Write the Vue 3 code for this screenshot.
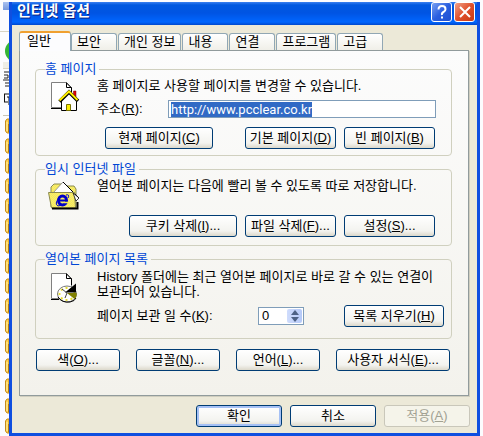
<template>
  <div class="desktop">
    <div class="explorer-edge" aria-hidden="true">
      <div class="edge-title"></div>
      <div class="edge-menu"></div>
      <div class="edge-toolbar"><span class="back-btn"></span></div>
      <div class="edge-address"></div>
      <svg class="edge-glyph" viewBox="0 0 9 38" width="9" height="38">
        <path d="M4 3h5M4 6h4v3H4M3 11h6M5 14h4M5 17h4" stroke="#222" fill="none" />
        <path d="M4 25h5M4.500 25v8M4 33h4M7 28h2v8" stroke="#111" fill="none" />
      </svg>
      <div class="edge-header"></div>
      <div class="edge-list">
        <svg v-for="n in 16" :key="n" viewBox="0 0 9 20" width="9" height="20">
          <path d="M9 3H7L5.500 5v10L7 17h2z" fill="#ffd24a" stroke="#c48a1c" />
          <path d="M7 6v9" stroke="#fff0a8" />
          <path d="M8.500 8v8" stroke="#b27c14" />
        </svg>
      </div>
    </div>

    <main class="dialog">
      <header class="title-bar">
        <h1>인터넷 옵션</h1>
        <button class="caption-btn help" type="button" aria-label="도움말">
          <svg viewBox="0 0 18 18" width="18" height="18">
            <path d="M5.500 6.500Q5.500 3 9 3t3.500 3.200Q12.500 8 10.500 9T9 12" fill="none" stroke="#fff" stroke-width="2" />
            <path d="M8 13.500h2v2H8z" fill="#fff" />
          </svg>
        </button>
        <button class="caption-btn close" type="button" aria-label="닫기">
          <svg viewBox="0 0 18 18" width="18" height="18">
            <path d="M4 4l10 10M14 4L4 14" stroke="#fff" stroke-width="2" />
          </svg>
        </button>
      </header>

      <nav class="tabs" role="tablist">
        <button
          v-for="tab in tabs"
          :key="tab"
          type="button"
          role="tab"
          class="tab"
          :class="{ active: tab === activeTab }"
          :aria-selected="tab === activeTab"
          @click="activeTab = tab"
        >{{ tab }}</button>
      </nav>

      <section class="panel">
        <fieldset class="group home">
          <legend>홈 페이지</legend>
          <div class="group-body">
            <svg class="icon" viewBox="0 0 32 32" width="32" height="32">
              <path d="M3.500 2.500h15l5 5v20h-20z" fill="#fff" stroke="#808080" />
              <path d="M18.500 2.500v5h5M18.500 3l5 5v5M3 28.500h11" fill="none" stroke="#000" />
              <path d="M25.500 11h2.500v7l-2.500-3z" fill="#e00000" stroke="#800000" stroke-width=".5" />
              <path d="M14 20l7-7 7 7v11H14z" fill="#fff" />
              <path d="M13.500 20v10.500h15V20" fill="none" stroke="#000" />
              <path d="M11.500 21.500L21 12l9 9" fill="none" stroke="#000" stroke-width="3.500" />
              <path d="M11.500 20.500L21 11.500l8.500 8.500" fill="none" stroke="#ffef00" stroke-width="2" />
              <path d="M18.500 24.500h4v6h-4z" fill="#ffef00" stroke="#7a7400" />
            </svg>
            <div class="fields">
              <p>홈 페이지로 사용할 페이지를 변경할 수 있습니다.</p>
              <div class="address-row">
                <label for="address">주소(<u>R</u>):</label>
                <input id="address" ref="addressInput" v-model="address" type="text" spellcheck="false">
              </div>
              <div class="actions">
                <button class="btn wide" type="button">현재 페이지(<u>C</u>)</button>
                <button class="btn" type="button">기본 페이지(<u>D</u>)</button>
                <button class="btn" type="button">빈 페이지(<u>B</u>)</button>
              </div>
            </div>
          </div>
        </fieldset>

        <fieldset class="group files">
          <legend>임시 인터넷 파일</legend>
          <div class="group-body">
            <svg class="icon" viewBox="0 0 32 32" width="32" height="32">
              <defs>
                <pattern id="dither" width="2" height="2" patternUnits="userSpaceOnUse">
                  <rect width="2" height="2" fill="#fff04a" />
                  <path d="M0 0h1v1H0zM1 1h1v1H1z" fill="#eee680" />
                </pattern>
              </defs>
              <path d="M3 27V7l3-3h8l2 2h10l2 3v18z" fill="url(#dither)" stroke="#8a8a50" />
              <path d="M5 13L15 2l16 16-4 3V13z" fill="#fff" stroke="#777" stroke-width=".7" />
              <path d="M15 2l16 16" stroke="#000" />
              <path d="M.5 12.500h26l1 15.500h-24z" fill="url(#dither)" stroke="#8a8a50" />
              <path d="M4 28.500h25.500V22" fill="none" stroke="#000" stroke-width="2" />
              <path d="M25 13l6 5-3 3z" fill="#fff" stroke="#000" stroke-width=".7" />
              <ellipse cx="14.500" cy="20.500" rx="4" ry="4.500" fill="none" stroke="#0000c8" stroke-width="3" />
              <path d="M11 20.500h8" stroke="#0000c8" stroke-width="2" />
              <path d="M16 22.500h5" stroke="#f4ea50" stroke-width="1.500" />
              <path d="M18 15q4-1 2 3M11 18q-5 6-1 8 2 0 4-2" fill="none" stroke="#0000c8" />
            </svg>
            <div class="fields">
              <p>열어본 페이지는 다음에 빨리 볼 수 있도록 따로 저장합니다.</p>
              <div class="actions">
                <button class="btn wide" type="button">쿠키 삭제(<u>I</u>)...</button>
                <button class="btn" type="button">파일 삭제(<u>F</u>)...</button>
                <button class="btn" type="button">설정(<u>S</u>)...</button>
              </div>
            </div>
          </div>
        </fieldset>

        <fieldset class="group history">
          <legend>열어본 페이지 목록</legend>
          <div class="group-body">
            <svg class="icon" viewBox="0 0 32 32" width="32" height="32">
              <path d="M3.500 2.500h15l5 5v20h-20z" fill="#fff" stroke="#808080" />
              <path d="M18.500 2.500v5h5M18.500 3l5 5v6M3 28.500h8" fill="none" stroke="#000" />
              <ellipse cx="19" cy="23" rx="9.500" ry="8" fill="#fff" stroke="#777" />
              <ellipse cx="19" cy="23" rx="7.500" ry="6" fill="none" stroke="#e6dc30" stroke-width="2" stroke-dasharray="2 3" />
              <path d="M10 26q4 6 12 5 5-1 6-4" fill="none" stroke="#000" />
              <path d="M19 22h9.500q1 3-2 6z" fill="#808000" />
              <path d="M17 21.500l11-9v9z" fill="#000" />
              <path d="M14 18l5 4-2 5" fill="none" stroke="#444" />
            </svg>
            <div class="fields">
              <p>History 폴더에는 최근 열어본 페이지로 바로 갈 수 있는 연결이<br>보관되어 있습니다.</p>
              <div class="history-row">
                <label for="days">페이지 보관 일 수(<u>K</u>):</label>
                <div class="spinner">
                  <input id="days" v-model.number="days" type="text">
                  <div class="spin-buttons">
                    <button type="button" aria-label="늘리기" @click="days++">
                      <svg viewBox="0 0 8 5" width="8" height="5"><path d="M0 5l4-5 4 5z" fill="#4d6185" /></svg>
                    </button>
                    <button type="button" aria-label="줄이기" @click="days = Math.max(0, days - 1)">
                      <svg viewBox="0 0 8 5" width="8" height="5"><path d="M0 0l4 5 4-5z" fill="#4d6185" /></svg>
                    </button>
                  </div>
                </div>
                <button class="btn clear" type="button">목록 지우기(<u>H</u>)</button>
              </div>
            </div>
          </div>
        </fieldset>

        <div class="extras">
          <button class="btn" type="button">색(<u>O</u>)...</button>
          <button class="btn" type="button">글꼴(<u>N</u>)...</button>
          <button class="btn" type="button">언어(<u>L</u>)...</button>
          <button class="btn long" type="button">사용자 서식(<u>E</u>)...</button>
        </div>
      </section>

      <footer class="footer">
        <button class="btn default" type="button">확인</button>
        <button class="btn" type="button">취소</button>
        <button class="btn" type="button" disabled>적용(<u>A</u>)</button>
      </footer>
    </main>
  </div>
</template>

<script setup>
import { ref, onMounted } from 'vue'

const tabs = ['일반', '보안', '개인 정보', '내용', '연결', '프로그램', '고급']
const activeTab = ref('일반')
const address = ref('http://www.pcclear.co.kr')
const days = ref(0)
const addressInput = ref(null)

onMounted(() => {
  addressInput.value.focus()
  addressInput.value.select()
})
</script>

<style>
body {
  margin: 0;
  background: #fcfcfe;
}
</style>

<style scoped>
.desktop {
  display: flex;
  padding: 2px 3px 3px 0;
  font-family: "Liberation Sans", "Noto Sans CJK KR", sans-serif;
  font-size: 13px;
  line-height: 16px;
  color: #000;
}

button,
input {
  box-sizing: border-box;
  font: inherit;
  color: inherit;
  margin: 0;
  padding: 0;
}

p {
  margin: 0;
  white-space: nowrap;
}

/* sliver of the explorer window behind the dialog */
.explorer-edge {
  width: 9px;
  flex: none;
  overflow: hidden;
}

.explorer-edge svg {
  display: block;
}

.edge-title {
  height: 8px;
  margin-left: 3px;
  background: linear-gradient(#a9c1f0, #7798dc);
}

.edge-menu {
  height: 21px;
  border-bottom: 1px solid #d8d4c4;
}

.edge-toolbar {
  height: 30px;
  padding-top: 8px;
  box-sizing: border-box;
  overflow: hidden;
}

.back-btn {
  display: block;
  width: 22px;
  height: 22px;
  margin-left: 5px;
  border-radius: 50%;
  background: #36b536;
}

.edge-address {
  height: 6px;
  margin-left: 3px;
  background: #efeee6;
  border-bottom: 1px solid #d8d4c4;
}

.edge-header {
  height: 8px;
  margin-left: 3px;
  border-bottom: 1px solid #c9c5b4;
}

.dialog {
  flex: 1;
  min-width: 0;
  background: #ece9d8;
  border: solid #0f4fe0;
  border-width: 0 3px 3px;
}

.title-bar {
  display: flex;
  gap: 2px;
  height: 23px;
  padding-right: 2px;
  background: linear-gradient(#3a80f0 0, #0058e0 3px, #0054e3 11px, #0066ff 20px, #0048cc 23px);
}

.title-bar h1 {
  flex: 1;
  margin: 0;
  padding-left: 5px;
  font-size: 15px;
  line-height: 18px;
  color: #fff;
  text-shadow: 1px 1px #0a1f80;
}

.caption-btn {
  width: 21px;
  height: 20px;
  display: grid;
  place-items: center;
  border: 1px solid #fff;
  border-radius: 3px;
}

.help {
  background: linear-gradient(135deg, #7ba2f2, #2a5fe0 50%, #1e4fd0);
}

.close {
  background: linear-gradient(135deg, #f0a088, #e0502c 50%, #c83a14);
}

.tabs {
  display: flex;
  align-items: flex-end;
  gap: 1px;
  padding: 6px 8px 0 7px;
}

.tab {
  height: 17px;
  min-width: 46px;
  padding: 0 5px;
  border: 1px solid #91a7b4;
  border-bottom: 0;
  border-radius: 3px 3px 0 0;
  background: linear-gradient(#fff, #f0efe8);
  text-align: left;
  line-height: 16px;
  white-space: nowrap;
}

.tab.active {
  position: relative;
  height: 20px;
  width: 52px;
  margin-right: -1px;
  margin-bottom: -1px;
  padding: 0 7px 3px;
  border-top: 2px solid #f0a030;
  background: #fcfcfe;
}

.panel {
  margin: 0 8px 0 7px;
  padding: 10px 16px 24px 15px;
  border: 1px solid #919b9c;
  background: linear-gradient(#fcfcfc, #f3f2ec);
  box-shadow: 1px 1px #d0cebf;
}

.group {
  margin: 0 0 5px;
  padding: 1px 16px 6px 9px;
  min-width: 0;
  border: 1px solid #d0d0bf;
  border-radius: 4px;
}

.group.files {
  padding-bottom: 8px;
}

.group.history {
  margin-bottom: 10px;
  padding: 2px 7px 11px 9px;
}

legend {
  padding: 0 3px 0 0;
  color: #0046d5;
}

.group-body {
  display: flex;
  gap: 17px;
}

.icon {
  flex: none;
  margin: 2px 0 0 3px;
}

.fields {
  flex: 1;
  min-width: 0;
}

.address-row {
  display: flex;
  align-items: center;
  margin: 6px 0 9px;
}

.address-row label {
  width: 71px;
}

.address-row input {
  flex: 1;
  min-width: 0;
  height: 18px;
  margin-right: -1px;
  padding: 0 2px;
  border: 1px solid #7f9db9;
  background: #fff;
  font-family: Roboto, sans-serif;
  outline: none;
}

.address-row input::selection {
  background: #316ac5;
  color: #fff;
}

.actions {
  display: flex;
  justify-content: flex-end;
  gap: 8px;
}

.files .actions {
  margin-top: 21px;
}

.btn {
  width: 91px;
  height: 22px;
  border: 1px solid #003c74;
  border-radius: 3px;
  background: linear-gradient(#fff, #f3f3ef 75%, #dcd8cb);
  line-height: 18px;
  white-space: nowrap;
}

.btn.wide {
  width: 108px;
}

.home .btn.wide {
  margin-right: 24px;
}

.history p {
  line-height: 15px;
}

.history-row {
  display: flex;
  align-items: center;
  margin-top: 6px;
}

.history-row label {
  width: 161px;
}

.spinner {
  display: flex;
  box-sizing: border-box;
  width: 46px;
  height: 18px;
  border: 1px solid #7f9db9;
  background: #fff;
}

.spinner input {
  flex: 1;
  min-width: 0;
  padding-left: 3px;
  border: 0;
  background: none;
  outline: none;
}

.spin-buttons {
  display: flex;
  flex-direction: column;
  width: 15px;
  margin: 1px;
  border-radius: 2px;
  background: linear-gradient(90deg, #cfdcfc, #b5c9f8);
}

.spin-buttons button {
  flex: 1;
  display: grid;
  place-items: center;
  min-height: 0;
  border: 0;
  background: none;
}

.btn.clear {
  width: 100px;
  margin-left: auto;
}

.extras {
  display: flex;
  gap: 16px;
  padding-left: 1px;
}

.extras .btn {
  width: 84px;
}

.extras .btn.long {
  width: 114px;
}

.footer {
  display: flex;
  justify-content: flex-end;
  gap: 8px;
  padding: 9px 7px 3px;
}

.footer .btn {
  width: 86px;
}

.btn.default {
  box-shadow: inset 0 0 0 2px #a6c1f5;
}

.btn:disabled {
  border-color: #c9c7ba;
  background: #f5f4ea;
  color: #a1a192;
}
</style>
